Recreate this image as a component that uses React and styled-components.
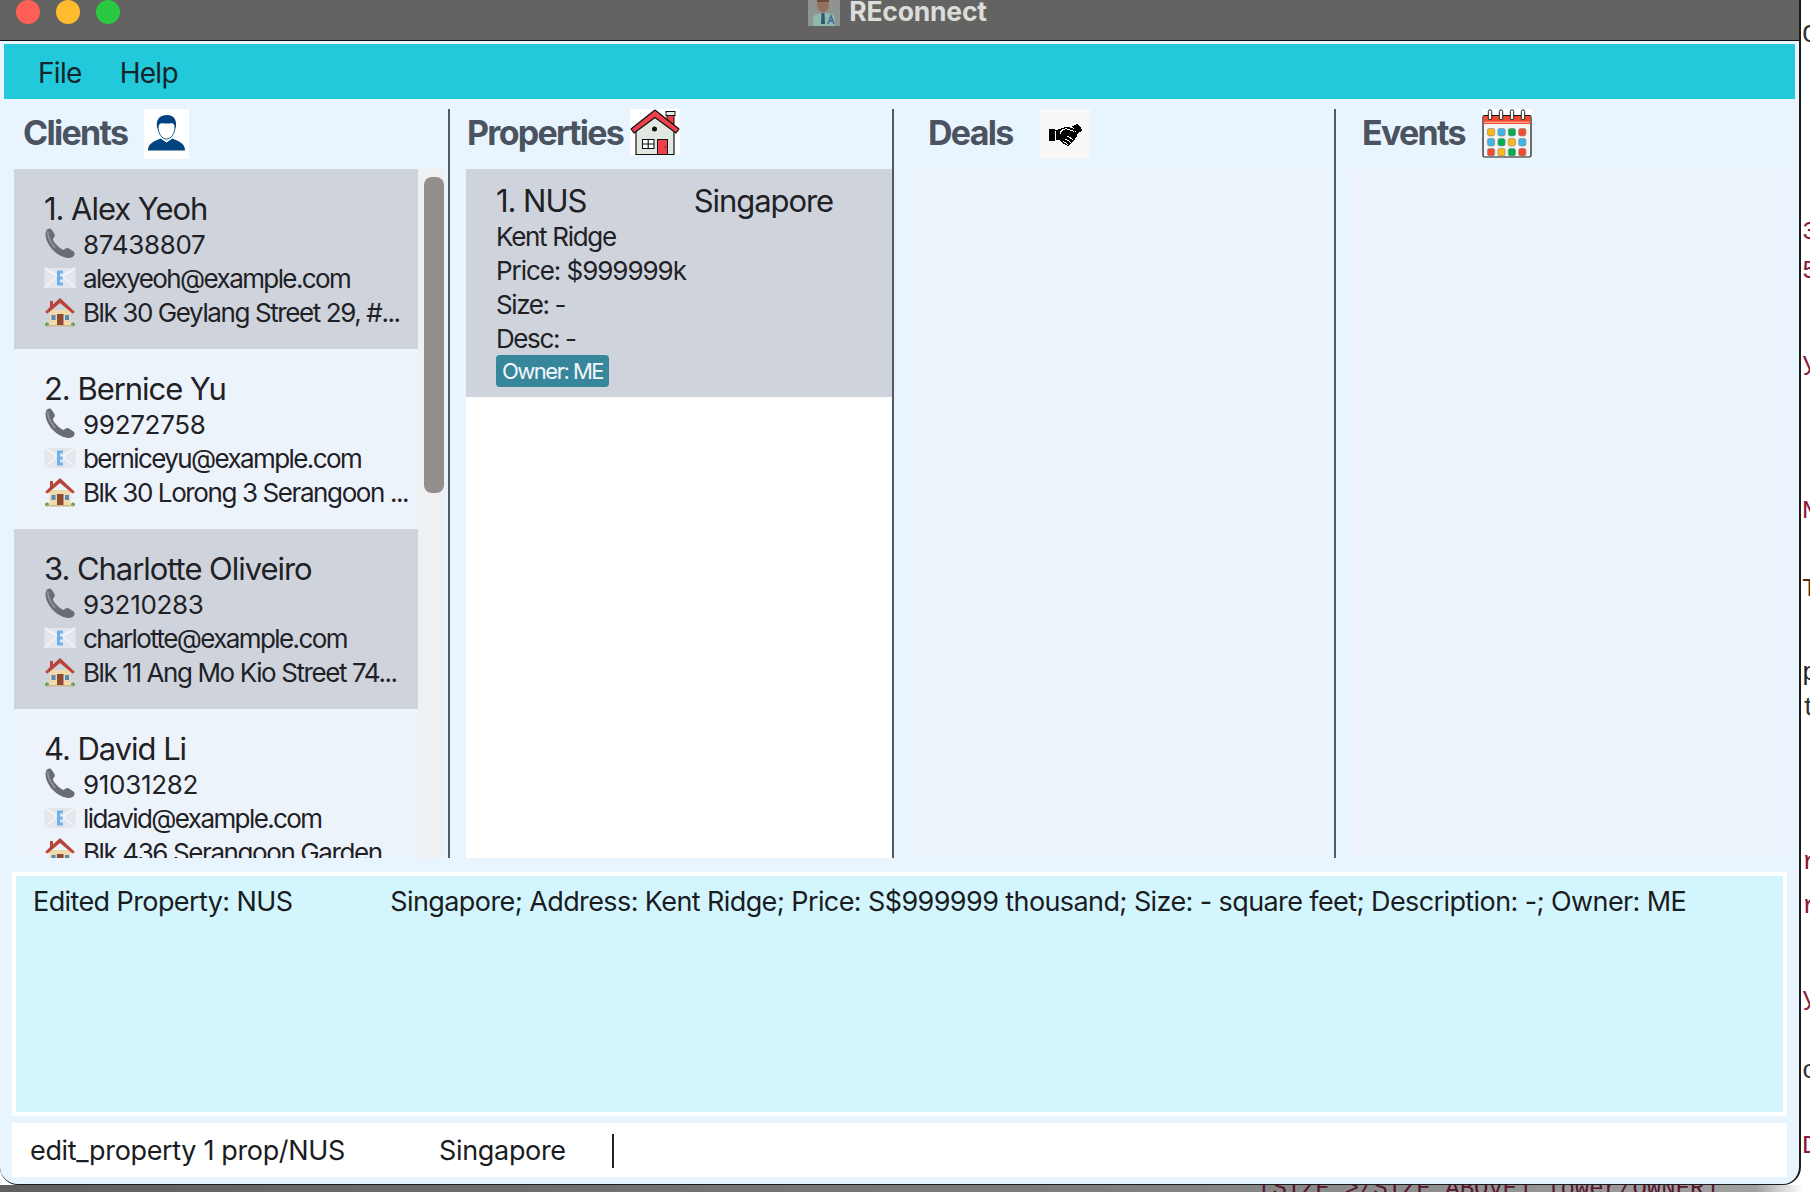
import React from 'react'
import styled, { createGlobalStyle } from 'styled-components'

const GlobalStyles = createGlobalStyle`
  html, body {
    margin: 0;
    padding: 0;
    background: #fff;
    font-family: 'Inter', 'Liberation Sans', sans-serif;
  }
  * { box-sizing: border-box; }
`

const Desk = styled.div`
  width: 1810px;
  height: 1192px;
  overflow: hidden;
  display: grid;
  grid-template-columns: 1801px 9px;
  grid-template-rows: 1185px 7px;
  background: #fff;
`

const Window = styled.div`
  grid-column: 1;
  grid-row: 1 / span 2;
  height: 1185px;
  z-index: 1;
  display: flex;
  flex-direction: column;
  overflow: hidden;
  background: #e8f5fe;
  border-right: 2px solid #1c1c1c;
  border-bottom: 1px solid #1c1c1c;
  border-radius: 0 0 18px 18px;
  color: #1f2125;
`

const TitleBar = styled.div`
  height: 41px;
  flex: none;
  background: #636361;
  border-bottom: 1px solid #111;
  position: relative;
  display: flex;
  justify-content: center;
  gap: 9px;
  padding-right: 4px;
`

const Lights = styled.div`
  position: absolute;
  left: 16px;
  top: 0;
  display: flex;
  gap: 16px;
`

const Light = styled.span`
  width: 24px;
  height: 24px;
  border-radius: 50%;
  background: ${p => p.$color};
`

const AppName = styled.span`
  font-size: 26.5px;
  line-height: 23px;
  font-weight: 700;
  letter-spacing: -0.2px;
  color: #dcdcda;
`

const MenuBar = styled.nav`
  height: 55px;
  flex: none;
  margin: 3px 4px 0 4px;
  padding: 2px 0 0 34px;
  background: #22c9da;
  display: flex;
  align-items: center;
  gap: 38px;
`

const MenuItem = styled.span`
  font-size: 28px;
  letter-spacing: -0.7px;
  color: #14262b;
`

const Board = styled.main`
  height: 749px;
  flex: none;
  margin: 10px 0 0 4px;
  display: flex;
`

const Column = styled.section`
  width: ${p => p.$width}px;
  flex: none;
  display: flex;
  flex-direction: column;
  padding-left: ${p => p.$left}px;
  padding-right: ${p => p.$right}px;
  border-right: ${p => (p.$last ? 'none' : '2px solid #555a60')};
`

const ColumnHead = styled.header`
  height: 60px;
  flex: none;
  display: flex;
  align-items: flex-start;
  padding-left: ${p => p.$inset}px;
  gap: ${p => p.$gap}px;
`

const Heading = styled.h2`
  margin: 0;
  font-size: 34px;
  line-height: 48px;
  font-weight: 700;
  letter-spacing: -1.7px;
  color: #4b5361;
`

const IconBox = styled.span`
  display: block;
  width: ${p => p.$w}px;
  height: ${p => p.$h}px;
  background: ${p => p.$bg || '#fff'};
  svg { display: block; width: 100%; height: 100%; }
`

const ListRow = styled.div`
  flex: 1;
  min-height: 0;
  display: flex;
  overflow: hidden;
`

const CardList = styled.div`
  flex: 1;
  min-width: 0;
  overflow: hidden;
  background: ${p => p.$bg};
`

const Track = styled.div`
  width: 27px;
  flex: none;
  background: #eff0f1;
  padding: 8px 1px 0 6px;
`

const Thumb = styled.div`
  height: 316px;
  border-radius: 8px;
  background: #938e8e;
`

const Card = styled.article`
  height: ${p => p.$height}px;
  padding: ${p => p.$top}px 0 0 30px;
  background: ${p => (p.$shaded ? '#ced3dc' : '#edf3fb')};
  overflow: hidden;
`

const CardName = styled.div`
  font-size: 31px;
  line-height: 37px;
  letter-spacing: -1.05px;
  white-space: pre;
`

const InfoRow = styled.div`
  height: 34px;
  display: flex;
  align-items: center;
  gap: 7px;
  font-size: 26px;
  letter-spacing: ${p => p.$spacing}px;
  white-space: nowrap;
`

const Emoji = styled.svg`
  width: 32px;
  height: 32px;
  flex: none;
  filter: blur(0.5px);
`

const Chip = styled.span`
  display: inline-block;
  height: 32px;
  padding: 0 6px;
  border-radius: 4px;
  background: #37869b;
  color: #f2f8fa;
  font-size: 22px;
  line-height: 32px;
  letter-spacing: -1.5px;
`

const MessageBox = styled.div`
  height: 244px;
  flex: none;
  margin: 14px 12px 0 12px;
  border: 4px solid #fff;
  background: #d3f6fe;
  padding: 8px 0 0 17px;
  font-size: 27px;
  line-height: 36px;
  letter-spacing: -0.6px;
  white-space: pre;
  color: #1a1c1f;
`

const CommandBox = styled.div`
  height: 54px;
  flex: none;
  margin: 7px 12px 0 12px;
  padding: 1px 0 0 18px;
  background: #fff;
  display: flex;
  align-items: center;
  font-size: 27px;
  letter-spacing: -0.35px;
  white-space: pre;
  color: #1a1c1f;
`

const Caret = styled.span`
  width: 2px;
  height: 34px;
  margin-left: 46px;
  background: #222;
`

const CodeStrip = styled.div`
  grid-column: 2;
  grid-row: 1;
  display: flex;
  flex-direction: column;
  padding-left: 1px;
  overflow: hidden;
  font-family: 'Liberation Mono', monospace;
  font-size: 26px;
`

const CodeChar = styled.span`
  height: 30px;
  line-height: 30px;
  flex: none;
  margin-top: ${p => p.$gap}px;
  color: ${p => p.$color};
`

const Dock = styled.div`
  grid-column: 1 / span 2;
  grid-row: 2;
  background: linear-gradient(90deg, #5f5f5f 0%, #7d7d7d 60%, #a0a0a0 97%, #fff 99.6%);
  padding-left: 1258px;
  font-family: 'Liberation Mono', monospace;
  font-size: 24px;
  line-height: 7px;
  white-space: pre;
  color: #57142c;
  overflow: hidden;
`

const PersonIcon = () => (
  <svg viewBox="0 0 45 50">
    <path d="M4 41.5C4 34.5 9 33 16.5 29.5L22.5 33.5L28.5 29.5C36 33 41 34.5 41 41.5Z" fill="#00447f" />
    <path d="M14 17C14 25 18 30 22.5 30C27 30 31 25 31 17" fill="#fff" stroke="#00447f" strokeWidth="0.9" />
    <path d="M13.5 20C11 11 15.5 6 23 6C30.5 6 33.5 12 31.5 20C31 16.5 29.5 14 27.5 14C23.5 15.5 19 13.5 16.5 14.5C15 15.5 14.5 17 13.5 20Z" fill="#00447f" />
  </svg>
)

const HouseIcon = () => (
  <svg viewBox="0 0 50 46">
    <rect x="37" y="4" width="7" height="11" fill="#f0404a" stroke="#111" strokeWidth="1" />
    <rect x="36" y="2.5" width="9" height="4" fill="#e6ebe6" stroke="#111" strokeWidth="1" />
    <path d="M6 20L25 6L44 20V45.5H6Z" fill="#e1e8e2" stroke="#111" strokeWidth="1.2" />
    <path d="M1 20L25 1L49 20L46 24L25 8.5L4 24Z" fill="#f0404a" stroke="#111" strokeWidth="1.2" strokeLinejoin="round" />
    <circle cx="24.5" cy="20" r="2.5" fill="#111" />
    <path d="M12.5 30.5H24V39.5H12.5ZM18.2 30.5V39.5M12.5 35H24" fill="#fff" stroke="#111" strokeWidth="1.1" />
    <rect x="27.5" y="30.5" width="10" height="15" fill="#f0404a" stroke="#111" strokeWidth="1" />
    <circle cx="35.5" cy="38" r="0.7" fill="#111" />
  </svg>
)

const HandshakeIcon = () => (
  <svg viewBox="0 0 50 50" shapeRendering="crispEdges">
    <rect x="8.5" y="20" width="6" height="11.5" fill="#000" />
    <path d="M15.5 21.5L22 19L27 17.5L34 20L37.5 26L33 33L28 37L24 35L19 31L15.5 30.5Z" fill="#000" />
    <path d="M32.5 17.5L37.5 14.5L42.5 21L37.5 25Z" fill="#000" />
    <path d="M20 25C20.5 21.5 24 19.5 27 20L34 22.5M27 27L33 30.5M25.5 30L31 33.5M23.5 32.5L28 35.5" fill="none" stroke="#fff" strokeWidth="1" />
  </svg>
)

const calendarCells = [
  ['#fdb913', '#3fb4ea', '#00b050', '#f4492e'],
  ['#3fb4ea', '#00b050', '#fdb913', '#3fb4ea'],
  ['#f4492e', '#fdb913', '#00b050', '#f4492e'],
]

const CalendarIcon = () => (
  <svg viewBox="0 0 50 49">
    <rect x="1" y="6.5" width="48" height="41.5" rx="1.5" fill="#f4f4f2" stroke="#111" strokeWidth="1.2" />
    <rect x="1.5" y="7" width="47" height="8" fill="#f4492e" />
    <rect x="2.5" y="12.8" width="45" height="0.9" fill="#ffd7c8" />
    {[8, 19, 30, 41].map(x => (
      <rect key={x} x={x - 1.7} y="0.8" width="3.4" height="10" rx="1.7" fill="#fff" stroke="#111" strokeWidth="0.9" />
    ))}
    {calendarCells.map((row, r) =>
      row.map((fill, c) => (
        <rect key={`${r}-${c}`} x={5.5 + c * 10.4} y={19.5 + r * 10} width="7.2" height="7.4" rx="1.8" fill={fill} stroke="#8a8a8a" strokeWidth="0.7" />
      ))
    )}
  </svg>
)

const AgentIcon = () => (
  <svg viewBox="0 0 32 26">
    <rect width="32" height="26" fill="#8f9491" />
    <path d="M5 26V19C5 14.5 10 13 16 13C22 13 27 14.5 27 19V26Z" fill="#8fb8ac" />
    <ellipse cx="15" cy="5" rx="6" ry="7" fill="#96705f" />
    <path d="M9 2H21V0H9Z" fill="#6b4a3c" />
    <path d="M13.5 13H16.5L17 24H13Z" fill="#2d5a70" />
    <path d="M20 24L23 16L26 24M21.5 21H24.5" fill="none" stroke="#3c6c9c" strokeWidth="1.5" />
  </svg>
)

const PhoneEmoji = () => (
  <Emoji viewBox="2 2 29 29">
    <path d="M4 4.5C2 9 5 17 10.5 22.5C15.5 27.5 23 30.5 27.5 28.5C30 27.5 30.5 24.5 28.5 23L24.5 20.5C22.5 19.5 21 21.5 19.5 22C16.5 21 11 15.5 10 12.5C10.5 11 12.5 9.5 11.5 7.5L9 3.5C7.5 1.5 5 2.5 4 4.5Z" fill="#696c70" />
    <path d="M5.5 5C5 9 8 15 12 20" fill="none" stroke="#92959a" strokeWidth="1.5" />
  </Emoji>
)

const MailEmoji = () => (
  <Emoji viewBox="0 0 32 32">
    <rect x="0.5" y="6" width="31" height="20" rx="1.5" fill="#e3e7ec" />
    <path d="M0.5 6L16 16L31.5 6M0.5 26L12 15M31.5 26L20 15" fill="none" stroke="#f4f6f8" strokeWidth="1.5" />
    <path d="M13 8.5H19V11.5H16V14.5H18.5V17.5H16V20.5H19V23.5H13Z" fill="#6fb2ea" />
  </Emoji>
)

const HomeEmoji = () => (
  <Emoji viewBox="0 0 32 32">
    <rect x="5.5" y="14" width="21" height="15" fill="#f1d9a8" />
    <path d="M16 2L31 16L28.5 17.5L16 7L3.5 17.5L1 16L6 11V5H9V8.5Z" fill="#b8453a" />
    <rect x="13" y="18" width="6.5" height="11" fill="#8d4a32" />
    <rect x="7.5" y="19" width="4" height="5" fill="#4f8cc0" />
    <rect x="21" y="19" width="4" height="5" fill="#4f8cc0" />
    <circle cx="3" cy="28.5" r="2" fill="#5da14a" />
    <circle cx="29" cy="28.5" r="2" fill="#5da14a" />
    <rect x="3" y="29" width="26" height="1.5" fill="#c9b98c" />
  </Emoji>
)

const clients = [
  { name: '1. Alex Yeoh', phone: '87438807', email: 'alexyeoh@example.com', address: 'Blk 30 Geylang Street 29, #...' },
  { name: '2. Bernice Yu', phone: '99272758', email: 'berniceyu@example.com', address: 'Blk 30 Lorong 3 Serangoon ...' },
  { name: '3. Charlotte Oliveiro', phone: '93210283', email: 'charlotte@example.com', address: 'Blk 11 Ang Mo Kio Street 74...' },
  { name: '4. David Li', phone: '91031282', email: 'lidavid@example.com', address: 'Blk 436 Serangoon Garden...' },
]

const codeChars = [
  { text: 'C', center: 35, color: '#333' },
  { text: '3', center: 232, color: '#8a1a3a' },
  { text: '5', center: 271, color: '#8a1a3a' },
  { text: 'y', center: 363, color: '#8a1a3a' },
  { text: 'N', center: 511, color: '#8a1a3a' },
  { text: 'T', center: 589, color: '#4a3010' },
  { text: 'p', center: 673, color: '#222' },
  { text: 't', center: 708, color: '#333' },
  { text: 'r', center: 862, color: '#8a1a3a' },
  { text: 'r', center: 906, color: '#8a1a3a' },
  { text: 'y', center: 998, color: '#8a1a3a' },
  { text: 'c', center: 1071, color: '#333' },
  { text: 'D', center: 1146, color: '#8a1a3a' },
]

const App = () => (
  <>
    <GlobalStyles />
    <Desk>
      <Window>
        <TitleBar>
          <Lights>
            <Light $color="#ff5f57" />
            <Light $color="#febc2e" />
            <Light $color="#28c840" />
          </Lights>
          <IconBox $w={32} $h={26} $bg="#8f9491"><AgentIcon /></IconBox>
          <AppName>REconnect</AppName>
        </TitleBar>
        <MenuBar>
          <MenuItem>File</MenuItem>
          <MenuItem>Help</MenuItem>
        </MenuBar>
        <Board>
          <Column $width={446} $left={10} $right={3}>
            <ColumnHead $inset={9} $gap={17}>
              <Heading>Clients</Heading>
              <IconBox $w={45} $h={50}><PersonIcon /></IconBox>
            </ColumnHead>
            <ListRow>
              <CardList $bg="#edf3fb">
                {clients.map((c, i) => (
                  <Card key={c.name} $height={180} $top={21} $shaded={i % 2 === 0}>
                    <CardName>{c.name}</CardName>
                    <InfoRow $spacing={-0.3}><PhoneEmoji />{c.phone}</InfoRow>
                    <InfoRow $spacing={-1.6}><MailEmoji />{c.email}</InfoRow>
                    <InfoRow $spacing={-1.4}><HomeEmoji />{c.address}</InfoRow>
                  </Card>
                ))}
              </CardList>
              <Track><Thumb /></Track>
            </ListRow>
          </Column>
          <Column $width={444} $left={16} $right={0}>
            <ColumnHead $inset={1} $gap={7}>
              <Heading>Properties</Heading>
              <IconBox $w={50} $h={46}><HouseIcon /></IconBox>
            </ColumnHead>
            <ListRow>
              <CardList $bg="#fff">
                <Card $height={228} $top={13} $shaded>
                  <CardName>{'1. NUS              Singapore'}</CardName>
                  <InfoRow $spacing={-1.3}>Kent Ridge</InfoRow>
                  <InfoRow $spacing={-1.05}>Price: $999999k</InfoRow>
                  <InfoRow $spacing={-1.4}>Size: -</InfoRow>
                  <InfoRow $spacing={-1.4}>Desc: -</InfoRow>
                  <Chip>Owner: ME</Chip>
                </Card>
              </CardList>
            </ListRow>
          </Column>
          <Column $width={442} $left={16} $right={6}>
            <ColumnHead $inset={18} $gap={27}>
              <Heading>Deals</Heading>
              <IconBox $w={50} $h={50} $bg="#f8f8f8"><HandshakeIcon /></IconBox>
            </ColumnHead>
            <ListRow><CardList $bg="#edf3fb" /></ListRow>
          </Column>
          <Column $width={459} $left={15} $right={8} $last>
            <ColumnHead $inset={11} $gap={17}>
              <Heading>Events</Heading>
              <IconBox $w={50} $h={49}><CalendarIcon /></IconBox>
            </ColumnHead>
            <ListRow><CardList $bg="#edf3fb" /></ListRow>
          </Column>
        </Board>
        <MessageBox>{'Edited Property: NUS              Singapore; Address: Kent Ridge; Price: S$999999 thousand; Size: - square feet; Description: -; Owner: ME'}</MessageBox>
        <CommandBox>{'edit_property 1 prop/NUS             Singapore'}<Caret /></CommandBox>
      </Window>
      <CodeStrip>
        {codeChars.map((c, i) => (
          <CodeChar key={c.center} $color={c.color} $gap={i === 0 ? c.center - 15 : c.center - codeChars[i - 1].center - 30}>
            {c.text}
          </CodeChar>
        ))}
      </CodeStrip>
      <Dock>{'[SIZE >/SIZE_ABOVE] lower/OWNER]'}</Dock>
    </Desk>
  </>
)

export default App
